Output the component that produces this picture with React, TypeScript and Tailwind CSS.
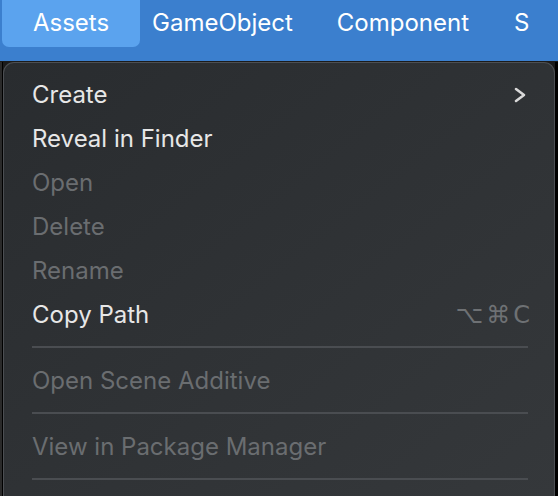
import React from 'react';

type Item = { label: string; enabled?: boolean; submenu?: boolean; shortcut?: string };

const topItems: Item[] = [
  { label: 'Create', enabled: true, submenu: true },
  { label: 'Reveal in Finder', enabled: true },
  { label: 'Open' },
  { label: 'Delete' },
  { label: 'Rename' },
  { label: 'Copy Path', enabled: true, shortcut: '⌥⌘C' },
];

const Chevron: React.FC = () => (
  <svg width="14" height="16" viewBox="0 0 14 16" fill="none" className="mr-[3px]">
    <path d="M3 2 L11 8 L3 14" stroke="#d9d9d9" strokeWidth="2.6" strokeLinecap="round" strokeLinejoin="round" />
  </svg>
);

const Row: React.FC<{ item: Item }> = ({ item }) => (
  <div className="h-[44px] flex items-center justify-between pl-[28px] pr-[24px]">
    <span className={item.enabled ? 'text-[#e7e7e7]' : 'text-[#6a6d70]'}>{item.label}</span>
    {item.submenu && <Chevron />}
    {item.shortcut && (
      <span className="text-[#6e7174] tracking-[3px] font-['DejaVu_Sans',sans-serif] text-[24px] -mr-[3px]">{item.shortcut}</span>
    )}
  </div>
);

const Separator: React.FC = () => <div className="mt-[9px] mb-[11px] ml-[28px] mr-[26px] h-[2px] bg-[#4a4d51]" />;

export default function App() {
  return (
    <div className="w-[558px] h-[496px] overflow-hidden bg-[#1b1b1b] font-['Inter',sans-serif] text-[24px]">
      <div className="h-[61px] bg-[#3b7fce] flex items-start text-white">
        <div className="ml-[2px] w-[138px] h-[47px] rounded-b-[7px] bg-[#5ba3ee] flex items-center justify-center pb-[2px]">
          Assets
        </div>
        <div className="ml-[12px] h-[47px] flex items-center pb-[2px]">GameObject</div>
        <div className="ml-[44px] h-[47px] flex items-center pb-[2px]">Component</div>
        <div className="ml-[45px] h-[47px] flex items-center pb-[2px]">S</div>
      </div>
      <div className="flex h-[435px] mt-[1px]">
        <div className="w-[3px] bg-[#2a2a2a] border-r border-black" />
        <div className="flex-1 rounded-t-[11px] border border-b-0 border-[#4c4f53] bg-gradient-to-br from-[#292c2f] to-[#35383b] pt-[10px]">
          {topItems.map((it) => (
            <Row key={it.label} item={it} />
          ))}
          <Separator />
          <Row item={{ label: 'Open Scene Additive' }} />
          <Separator />
          <Row item={{ label: 'View in Package Manager' }} />
          <Separator />
        </div>
        <div className="w-[3px] bg-black" />
      </div>
    </div>
  );
}
